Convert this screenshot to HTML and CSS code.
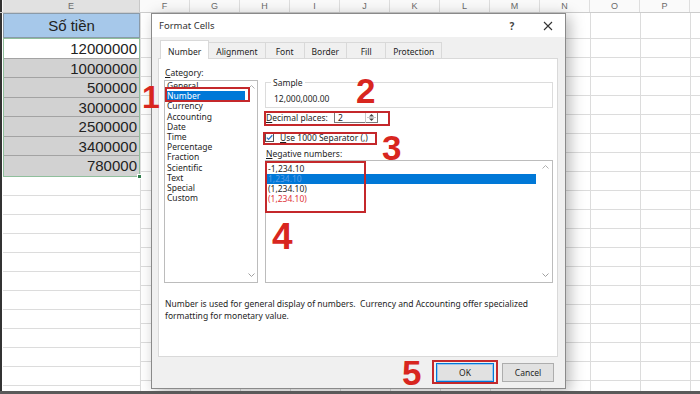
FILE: index.html
```html
<!DOCTYPE html>
<html lang="vi">
<head>
  <meta charset="UTF-8">
  <meta name="viewport" content="width=device-width, initial-scale=1.0">
  <title>Format Cells</title>
  <link rel="stylesheet" href="styles.css">
</head>
<body>
  <div class="sheet">
    <div class="col-head">
      <div class="corner"></div>
      <div class="ch ch-e">E</div>
      <div class="ch">F</div>
      <div class="ch">G</div>
      <div class="ch">H</div>
      <div class="ch">I</div>
      <div class="ch">J</div>
      <div class="ch">K</div>
      <div class="ch">L</div>
      <div class="ch">M</div>
      <div class="ch">N</div>
      <div class="ch">O</div>
      <div class="ch">P</div>
      <div class="ch ch-fill"></div>
    </div>

    <div class="sheet-body">
      <div class="row-head"></div>
      <div class="col-e">
        <div class="cell-title">Số tiền</div>
        <div class="sel">
          <div class="num active">12000000</div>
          <div class="num">10000000</div>
          <div class="num">500000</div>
          <div class="num">3000000</div>
          <div class="num">2500000</div>
          <div class="num">3400000</div>
          <div class="num">780000</div>
          <span class="fill-handle"></span>
        </div>
        <div class="col-e-rest"></div>
      </div>
      <div class="grid-rest"></div>
    </div>

    <div class="dialog">
      <div class="titlebar">
        <span class="title">Format Cells</span>
        <span class="tb-help">?</span>
        <span class="tb-close">
          <svg width="10" height="10" viewBox="0 0 10 10"><path d="M1 1L9 9M9 1L1 9" stroke="#333" stroke-width="1.1" fill="none"/></svg>
        </span>
      </div>

      <div class="tabs">
        <div class="tab active">Number</div>
        <div class="tab">Alignment</div>
        <div class="tab">Font</div>
        <div class="tab">Border</div>
        <div class="tab">Fill</div>
        <div class="tab">Protection</div>
      </div>

      <div class="panel">
        <div class="cat">
          <div class="lbl"><u>C</u>ategory:</div>
          <div class="listbox cat-list">
            <div class="items">
              <div class="item">General</div>
              <div class="item sel-item">Number</div>
              <div class="item">Currency</div>
              <div class="item">Accounting</div>
              <div class="item">Date</div>
              <div class="item">Time</div>
              <div class="item">Percentage</div>
              <div class="item">Fraction</div>
              <div class="item">Scientific</div>
              <div class="item">Text</div>
              <div class="item">Special</div>
              <div class="item">Custom</div>
            </div>
            <div class="scrollbar">
              <svg width="7" height="4" viewBox="0 0 7 4"><path d="M0.5 3.5L3.5 0.5L6.5 3.5" stroke="#b0b0b0" fill="none"/></svg>
              <svg width="7" height="4" viewBox="0 0 7 4"><path d="M0.5 0.5L3.5 3.5L6.5 0.5" stroke="#a0a0a0" fill="none"/></svg>
            </div>
          </div>
        </div>

        <div class="opts">
          <fieldset class="sample">
            <legend>Sample</legend>
            <div class="sample-val">12,000,000.00</div>
          </fieldset>

          <div class="dec-row">
            <span class="dec-lbl"><u>D</u>ecimal places:</span>
            <div class="spin">
              <span class="spin-val">2</span>
              <span class="spin-btns">
                <svg width="11" height="11" viewBox="0 0 11 11">
                  <path d="M3 4.5L5.5 2L8 4.5Z" fill="#444"/>
                  <path d="M3 6.5L5.5 9L8 6.5Z" fill="#444"/>
                  <path d="M1 5.5H10" stroke="#c8c8c8"/>
                </svg>
              </span>
            </div>
          </div>

          <div class="chk-row">
            <span class="chk">
              <svg width="9" height="9" viewBox="0 0 9 9">
                <rect x="0.5" y="0.5" width="8" height="8" fill="#fff" stroke="#555"/>
                <path d="M1.8 4.6L3.6 6.4L7.3 2.3" stroke="#2b74c7" stroke-width="1.3" fill="none"/>
              </svg>
            </span>
            <span><u>U</u>se 1000 Separator (,)</span>
          </div>

          <div class="lbl neg-lbl"><u>N</u>egative numbers:</div>
          <div class="listbox neg-list">
            <div class="items">
              <div class="item">-1,234.10</div>
              <div class="item sel-item faint">1,234.10</div>
              <div class="item">(1,234.10)</div>
              <div class="item red">(1,234.10)</div>
            </div>
            <div class="scrollbar">
              <svg width="7" height="4" viewBox="0 0 7 4"><path d="M0.5 3.5L3.5 0.5L6.5 3.5" stroke="#b0b0b0" fill="none"/></svg>
              <svg width="7" height="4" viewBox="0 0 7 4"><path d="M0.5 0.5L3.5 3.5L6.5 0.5" stroke="#a0a0a0" fill="none"/></svg>
            </div>
          </div>
        </div>

        <p class="desc">Number is used for general display of numbers.&nbsp; Currency and Accounting offer specialized<br>formatting for monetary value.</p>
      </div>

      <div class="actions">
        <button class="btn btn-ok" type="button">OK</button>
        <button class="btn btn-cancel" type="button">Cancel</button>
      </div>
    </div>

    <!-- red annotations drawn on top of the screenshot -->
    <span class="box box-num"></span>
    <span class="box box-dec"></span>
    <span class="box box-sep"></span>
    <span class="box box-neg"></span>
    <span class="box box-ok"></span>
    <span class="mark m1">1</span>
    <span class="mark m2">2</span>
    <span class="mark m3">3</span>
    <span class="mark m4">4</span>
    <span class="mark m5">5</span>
  </div>
</body>
</html>
```

FILE: styles.css
```css
* {
    box-sizing: border-box;
}
body {
    margin: 0;
    background: #fff;
    font-family: "Noto Sans", "Open Sans", sans-serif;
}
.sheet {
    position: relative;
    width: 700px;
    height: 394px;
    overflow: hidden;
    background: #fff;
    border-bottom: 3px solid #5a5a5a;
}

/* spreadsheet */
.col-head {
    display: flex;
    height: 13px;
    background: #fafafa;
    border-bottom: 1px solid #cdcdcd;
    font-family: "Liberation Sans", Arial, sans-serif;
    font-size: 9px;
    color: #6b6b6b;
}
.corner {
    flex: 0 0 3px;
    border-left: 2px solid #333;
}
.ch {
    flex: 0 0 50px;
    text-align: center;
    line-height: 12px;
    border-right: 1px solid #dedede;
}
.ch-e {
    flex-basis: 137px;
    background: #e1e1e1;
    border-right-color: #c8c8c8;
}
.ch-fill {
    flex: 1;
    border-right: none;
}
.sheet-body {
    display: flex;
    height: calc(100% - 13px);
}
.row-head {
    flex: 0 0 3px;
    border-left: 2px solid #333;
}
.col-e {
    flex: 0 0 137px;
    display: flex;
    flex-direction: column;
    font-family: "Liberation Sans", Arial, sans-serif;
    font-size: 15px;
    color: #222;
}
.cell-title {
    height: 25px;
    line-height: 23px;
    text-align: center;
    background: #a6c8ea;
    border: 1px solid #8a9aa8;
}
.sel {
    position: relative;
    border: 1px solid #8fbf9c;
}
.num {
    height: 19.5px;
    line-height: 19px;
    padding-right: 2px;
    text-align: right;
    background: #d2d2d2;
    border-bottom: 1px solid #a3a3a3;
}
.num:last-of-type {
    border-bottom: none;
}
.num.active {
    background: #fff;
}
.fill-handle {
    position: absolute;
    right: -3px;
    bottom: -3px;
    width: 5px;
    height: 5px;
    background: #2f7d4b;
    border: 1px solid #fff;
}
.col-e-rest {
    flex: 1;
    background-image: repeating-linear-gradient(to bottom, transparent 0 18px, #dcdcdc 18px 19px);
}
.grid-rest {
    flex: 1;
    background-image:
        repeating-linear-gradient(to right, #dcdcdc 0 1px, transparent 1px 50px),
        repeating-linear-gradient(to bottom, transparent 0 18px, #dcdcdc 18px 19px);
    background-position: 0 0, 0 7px;
}

/* dialog */
.dialog {
    position: absolute;
    left: 151px;
    top: 13px;
    width: 415px;
    height: 376px;
    display: flex;
    flex-direction: column;
    background: #f0f0f0;
    border: 1px solid #8a8a8a;
    box-shadow: 4px 3px 14px rgba(0,0,0,.28);
    font-size: 8.5px;
    color: #1e1e1e;
}
.titlebar {
    display: flex;
    align-items: center;
    height: 23px;
    padding-left: 7px;
    background: #fff;
}
.title {
    flex: 1;
    font-size: 9.5px;
    color: #333;
}
.tb-help {
    width: 20px;
    margin-right: 9px;
    text-align: center;
    font-size: 10px;
    font-weight: bold;
    color: #444;
}
.tb-close {
    display: flex;
    align-items: center;
    justify-content: center;
    width: 34px;
    height: 100%;
}
.tabs {
    display: flex;
    align-items: flex-end;
    height: 21px;
    margin: 1px 0 -1px 8px;
}
.tab {
    min-width: 40px;
    height: 17px;
    padding: 1px 7px 0;
    margin-right: -1px;
    line-height: 16px;
    text-align: center;
    background: #f0f0f0;
    border: 1px solid #d9d9d9;
    border-bottom: none;
}
.tab.active {
    position: relative;
    z-index: 1;
    height: 19px;
    padding-top: 3px;
    background: #fff;
}
.panel {
    display: grid;
    grid-template-columns: 94px 288px;
    column-gap: 7px;
    align-content: start;
    width: 400px;
    height: 299px;
    margin-left: 6px;
    padding: 8px 0 0 5px;
    background: #fff;
    border: 1px solid #d9d9d9;
}
.lbl {
    height: 11px;
    line-height: 11px;
}
.cat .lbl {
    margin-bottom: 2px;
    padding-left: 1px;
}
.listbox {
    display: flex;
    border: 1px solid #bcbcbc;
    overflow: hidden;
}
.items {
    flex: 1;
}
.scrollbar {
    display: flex;
    flex-direction: column;
    justify-content: space-between;
    align-items: center;
    width: 12px;
    padding: 4px 0 5px;
}
.cat-list {
    height: 203px;
}
.cat-list .item {
    height: 10.2px;
    line-height: 10.2px;
    padding-left: 2px;
    white-space: nowrap;
}
.cat-list .sel-item {
    margin-left: 1px;
    padding-left: 1px;
}
.sel-item {
    background: #0078d7;
    color: #fff;
}
.sample {
    margin: 10px 0 0;
    padding: 0 0 3px 5px;
    border: 1px solid #dcdcdc;
}
.sample legend {
    padding: 0 2px;
    line-height: 11px;
}
.sample-val {
    margin: 5px 0 0 3px;
    line-height: 11px;
}
.dec-row {
    display: flex;
    align-items: center;
    height: 14px;
    margin-top: 2px;
    padding-left: 1px;
}
.dec-lbl {
    width: 68px;
}
.spin {
    display: flex;
    align-items: center;
    width: 44px;
    height: 12px;
    border: 1px solid #7a7a7a;
}
.spin-val {
    flex: 1;
    padding-left: 3px;
}
.spin-btns {
    display: flex;
    border-left: 1px solid #c8c8c8;
}
.chk-row {
    display: flex;
    align-items: center;
    gap: 6px;
    height: 11px;
    margin-top: 8px;
}
.chk {
    display: flex;
}
.neg-lbl {
    margin: 5px 0 1px;
    padding-left: 1px;
}
.neg-list {
    height: 123px;
}
.neg-list .items {
    padding-top: 3px;
}
.neg-list .item {
    height: 10px;
    line-height: 10px;
    padding-left: 2px;
}
.neg-list .sel-item {
    margin-right: 2px;
}
.neg-list .scrollbar {
    width: 14px;
}
.item.faint {
    color: #5d9ee6;
}
.item.red {
    color: #e0353a;
}
.desc {
    grid-column: 1 / -1;
    margin: 15px 0 0;
    padding-left: 1px;
    line-height: 12px;
    white-space: nowrap;
}
.actions {
    display: flex;
    justify-content: flex-end;
    gap: 8px;
    margin-top: 6px;
    padding-right: 11px;
}
.btn {
    height: 19px;
    padding: 0;
    font: inherit;
    color: #1e1e1e;
    background: #e1e1e1;
    border: 1px solid #adadad;
}
.btn-ok {
    width: 58px;
    border-color: #0078d7;
    box-shadow: inset 0 0 0 1px #9cc4ec;
}
.btn-cancel {
    width: 52px;
}

/* annotations */
.box {
    position: absolute;
    border: 2px solid #c4282b;
}
.box-num { left: 165px; top: 87px; width: 85px; height: 15px; }
.box-dec { left: 264px; top: 111px; width: 126px; height: 15px; }
.box-sep { left: 263px; top: 132px; width: 114px; height: 13px; }
.box-neg { left: 265px; top: 161px; width: 101px; height: 52px; }
.box-ok { left: 432px; top: 360px; width: 66px; height: 24px; }
.mark {
    position: absolute;
    font-family: "Liberation Sans", Arial, sans-serif;
    font-weight: bold;
    font-size: 35px;
    line-height: 35px;
    color: #d8261f;
}
.m1 { left: 142px; top: 81px; font-size: 32px; line-height: 32px; }
.m2 { left: 356px; top: 73px; }
.m3 { left: 382px; top: 130px; }
.m4 { left: 272px; top: 218px; font-size: 37px; line-height: 37px; }
.m5 { left: 402px; top: 355px; }
```
